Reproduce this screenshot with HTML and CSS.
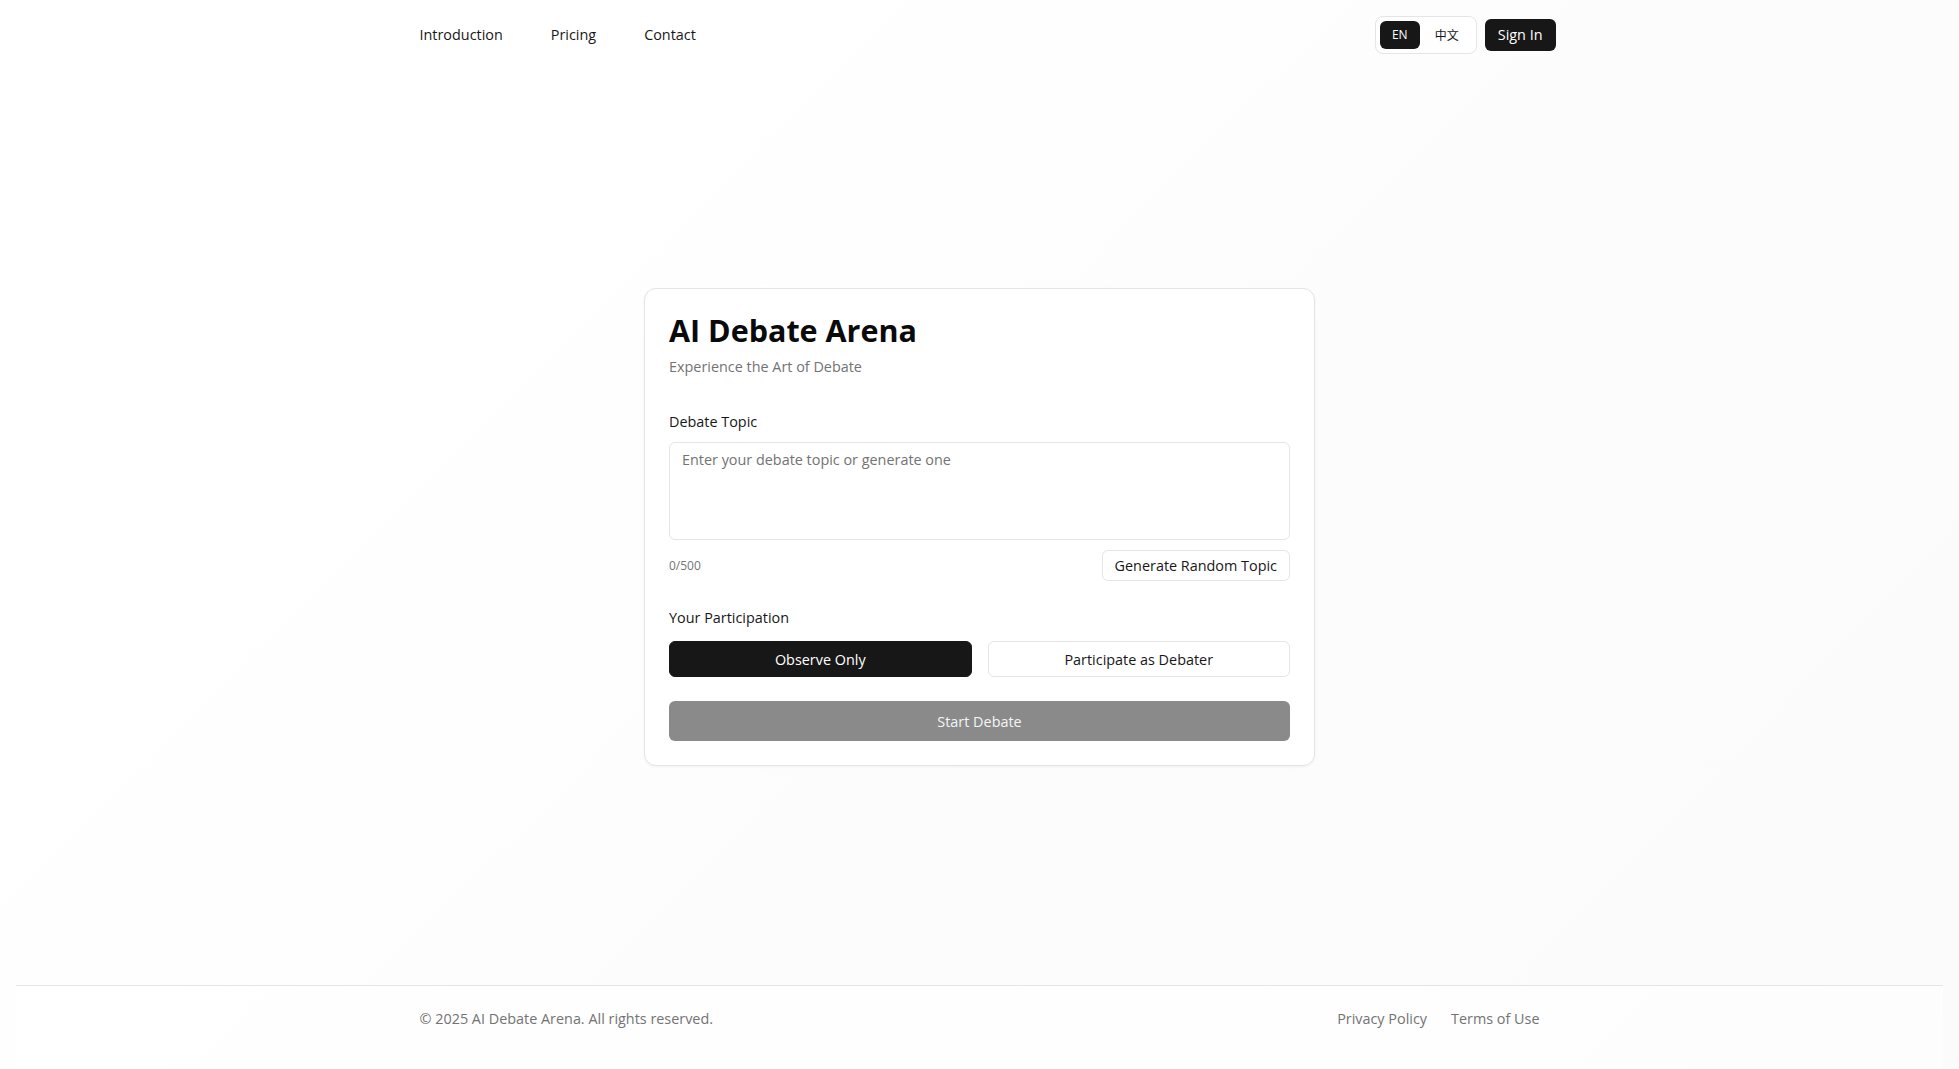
FILE: index.html
```html
<!DOCTYPE html>
<html lang="en">
<head>
<meta charset="utf-8">
<title>AI Debate Arena</title>
<link rel="stylesheet" href="styles.css">
</head>
<body>
<header class="site-header">
  <div class="header-inner">
    <nav class="main-nav">
      <a href="#" class="nav-link">Introduction</a>
      <a href="#" class="nav-link">Pricing</a>
      <a href="#" class="nav-link">Contact</a>
    </nav>
    <div class="header-actions">
      <div class="lang-switch">
        <button class="lang-btn lang-active">EN</button>
        <button class="lang-btn">中文</button>
      </div>
      <button class="signin-btn">Sign In</button>
    </div>
  </div>
</header>

<main class="main">
  <section class="card">
    <h1 class="card-title">AI Debate Arena</h1>
    <p class="card-subtitle">Experience the Art of Debate</p>

    <label class="field-label topic-label" for="topic">Debate Topic</label>
    <textarea id="topic" class="topic-input" placeholder="Enter your debate topic or generate one"></textarea>
    <div class="topic-meta">
      <span class="counter">0/500</span>
      <button class="outline-btn">Generate Random Topic</button>
    </div>

    <div class="field-label part-label">Your Participation</div>
    <div class="part-options">
      <button class="part-btn part-active">Observe Only</button>
      <button class="part-btn">Participate as Debater</button>
    </div>

    <button class="start-btn">Start Debate</button>
  </section>
</main>

<footer class="site-footer">
  <div class="footer-inner">
    <span class="copyright">© 2025 AI Debate Arena. All rights reserved.</span>
    <div class="footer-links">
      <a href="#" class="footer-link">Privacy Policy</a>
      <a href="#" class="footer-link">Terms of Use</a>
    </div>
  </div>
</footer>
</body>
</html>
```

FILE: styles.css
```css
* { box-sizing: border-box; }

html, body { height: 100%; }

body {
  margin: 0;
  min-height: 100vh;
  display: flex;
  flex-direction: column;
  font-family: "Open Sans", "Noto Sans", "Noto Sans CJK SC", sans-serif;
  font-size: 14.4px;
  line-height: 20px;
  color: #171717;
  background: linear-gradient(135deg, #ffffff 0%, #ffffff 25%, #fcfcfc 60%, #fbfbfb 100%);
}

button, textarea {
  font-family: inherit;
}

/* Header */
.site-header {
  height: 69px;
  flex-shrink: 0;
}

.header-inner {
  width: 1152px;
  height: 100%;
  margin: 0 auto;
  display: flex;
  align-items: center;
  justify-content: space-between;
}

.main-nav {
  display: flex;
  gap: 16px;
}

.nav-link {
  padding: 6px 16px;
  color: #171717;
  text-decoration: none;
  font-size: 14.4px;
}

.header-actions {
  display: flex;
  align-items: center;
  gap: 8px;
}

.lang-switch {
  display: flex;
  align-items: center;
  padding: 4px;
  border: 1px solid #e5e5e5;
  border-radius: 8px;
  background: #fff;
}

.lang-btn {
  height: 28px;
  border: 0;
  border-radius: 6px;
  background: transparent;
  font-size: 12px;
  color: #171717;
  padding: 0 13px 0 15px;
  cursor: pointer;
}

.lang-active {
  width: 40px;
  padding: 0;
  background: #171717;
  color: #fff;
  font-weight: 500;
}

.signin-btn {
  height: 32px;
  padding: 0 13px;
  border: 0;
  border-radius: 6px;
  background: #171717;
  color: #fff;
  font-size: 14.4px;
  cursor: pointer;
}

/* Main */
.main {
  flex: 1;
  display: flex;
  align-items: center;
  justify-content: center;
}

.card {
  width: 671px;
  padding: 24px;
  background: #fff;
  border: 1px solid #e5e5e5;
  border-radius: 12px;
  box-shadow: 0 1px 3px rgba(0, 0, 0, 0.05);
}

.card-title {
  margin: 0;
  font-size: 30.5px;
  line-height: 34px;
  font-weight: 700;
  color: #0a0a0a;
}

.card-subtitle {
  margin: 9px 0 0;
  color: #737373;
  font-size: 14.4px;
  line-height: 22px;
}

.field-label {
  display: block;
  font-size: 14.4px;
  line-height: 20px;
  color: #171717;
}

.topic-label {
  margin-top: 34px;
  margin-bottom: 10px;
}

.topic-input {
  display: block;
  width: 100%;
  height: 98px;
  padding: 7px 12px;
  border: 1px solid #e5e5e5;
  border-radius: 6px;
  resize: none;
  font-size: 14.4px;
  line-height: 20px;
  color: #171717;
  background: #fff;
  outline: none;
}

.topic-input::placeholder {
  color: #737373;
}

.topic-meta {
  margin-top: 10px;
  display: flex;
  align-items: center;
  justify-content: space-between;
}

.counter {
  font-size: 12px;
  color: #737373;
}

.outline-btn {
  height: 31px;
  padding: 0 12px;
  border: 1px solid #e5e5e5;
  border-radius: 6px;
  background: #fff;
  color: #171717;
  font-size: 14.4px;
  cursor: pointer;
}

.part-label {
  margin-top: 27px;
  margin-bottom: 13px;
}

.part-options {
  display: grid;
  grid-template-columns: 1fr 1fr;
  gap: 16px;
}

.part-btn {
  height: 36px;
  border: 1px solid #e5e5e5;
  border-radius: 6px;
  background: #fff;
  color: #171717;
  font-size: 14.4px;
  cursor: pointer;
}

.part-active {
  background: #171717;
  border-color: #171717;
  color: #fff;
}

.start-btn {
  display: block;
  width: 100%;
  height: 40px;
  margin-top: 24px;
  border: 0;
  border-radius: 6px;
  background: #8a8a8a;
  color: #f5f5f5;
  font-size: 14.4px;
}

/* Footer */
.site-footer {
  flex-shrink: 0;
  margin: 0 16px;
  border-top: 1px solid #e5e5e5;
  padding: 23px 0 40px;
  background: rgba(255, 255, 255, 0.5);
}

.footer-inner {
  width: 1120px;
  margin: 0 auto;
  display: flex;
  align-items: center;
  justify-content: space-between;
}

.copyright {
  color: #737373;
  font-size: 14.4px;
}

.footer-links {
  display: flex;
  gap: 24px;
}

.footer-link {
  color: #737373;
  text-decoration: none;
  font-size: 14.4px;
}
```
